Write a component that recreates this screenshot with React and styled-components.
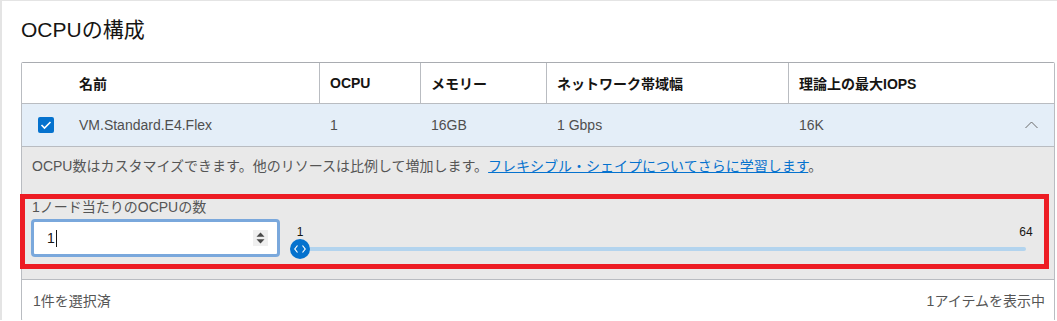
import React from 'react';
import styled, { createGlobalStyle } from 'styled-components';

const GlobalStyle = createGlobalStyle`
  html, body {
    margin: 0;
    padding: 0;
    background: #ffffff;
  }
  body {
    font-family: "Liberation Sans", "Noto Sans CJK JP", sans-serif;
    color: #161513;
  }
`;

const Page = styled.div`
  border-left: 2px solid #e4e4e4;
  border-top: 1px solid #e4e4e4;
  padding: 15px 2px 0 19px;
  height: 320px;
  box-sizing: border-box;
  overflow: hidden;
`;

const Title = styled.h2`
  margin: 0;
  font-size: 21px;
  font-weight: normal;
  line-height: 28px;
  color: #161513;
`;

const Table = styled.div`
  margin-top: 18px;
  border: 1px solid #b9bcc1;
  border-top-color: #a9acb1;
  border-radius: 2px;
  font-size: 14px;
`;

const Row = styled.div`
  display: grid;
  grid-template-columns: 46px 251px 101px 126px 242px 1fr;
  height: ${p => p.$h}px;
  background: ${p => p.$bg || '#ffffff'};
  border-bottom: 1px solid #b9bcc1;
`;

const HeadCell = styled.div`
  display: flex;
  align-items: center;
  padding-left: ${p => (p.$first ? 11 : 10)}px;
  border-left: ${p => (p.$divider ? '1px solid #b9bcc1' : 'none')};
  font-weight: bold;
  color: #161513;
`;

const Cell = styled.div`
  display: flex;
  align-items: center;
  justify-content: ${p => (p.$center ? 'center' : 'flex-start')};
  padding-left: ${p => (p.$center ? 0 : 11)}px;
  padding-right: ${p => (p.$pr ? p.$pr : 0)}px;
  color: #4f4f4f;
`;

const Check = styled.span`
  width: 16px;
  height: 16px;
  border-radius: 2px;
  background: #0572ce;
  display: flex;
  align-items: center;
  justify-content: center;
  margin-left: 2px;
`;

const Chevron = styled.svg`
  margin-left: auto;
`;

const Details = styled.div`
  background: #e9e9e9;
  border-bottom: 1px solid #b9bcc1;
  padding: 9px 5px 10px 0;
`;

const Description = styled.p`
  margin: 0 0 18px 10px;
  line-height: 20px;
  font-size: 14px;
  color: #555555;
`;

const LearnLink = styled.a`
  color: #0572ce;
  text-decoration: underline;
`;

const Highlight = styled.div`
  margin-left: -2px;
  border: 5px solid #ed1c24;
  padding: 0 8px 5px 6px;
`;

const FieldLabel = styled.div`
  padding-left: 1px;
  font-size: 14px;
  line-height: 16px;
  color: #555555;
`;

const FieldRow = styled.div`
  display: flex;
  gap: 10px;
  margin-top: 4px;
`;

const NumberBox = styled.div`
  width: 249px;
  height: 38px;
  box-sizing: border-box;
  border: 3px solid #7aa8dc;
  border-radius: 4px;
  background: #ffffff;
  display: flex;
  align-items: center;
  padding: 0 9px 0 13px;
  font-size: 14px;
  color: #161513;
`;

const Caret = styled.span`
  display: inline-block;
  width: 1px;
  height: 17px;
  background: #161513;
  margin-left: 1px;
`;

const Spinner = styled.span`
  margin-left: auto;
  width: 15px;
  height: 16px;
  background: #efefef;
  display: flex;
  align-items: center;
  justify-content: center;
`;

const Slider = styled.div`
  flex: 1;
  padding-top: 6px;
`;

const Ticks = styled.div`
  display: flex;
  justify-content: space-between;
  font-size: 12px;
  line-height: 14px;
  color: #161513;
`;

const Tick = styled.span`
  width: 20px;
  text-align: center;
`;

const TrackArea = styled.div`
  height: 20px;
  margin: 0 10px;
  position: relative;
  display: flex;
  align-items: center;
`;

const Track = styled.div`
  flex: 1;
  height: 4px;
  border-radius: 2px;
  background: #b3d4ee;
`;

const Thumb = styled.span`
  position: absolute;
  top: 0;
  width: 20px;
  height: 20px;
  margin-left: -10px;
  border-radius: 50%;
  background: #0572ce;
  display: flex;
  align-items: center;
  justify-content: center;
`;

const Footer = styled.div`
  height: 40px;
  display: flex;
  align-items: center;
  justify-content: space-between;
  padding: 0 9px 0 11px;
  color: #555555;
  font-size: 14px;
`;

const columns = ['名前', 'OCPU', 'メモリー', 'ネットワーク帯域幅', '理論上の最大IOPS'];
const shape = { name: 'VM.Standard.E4.Flex', ocpu: '1', memory: '16GB', network: '1 Gbps', iops: '16K' };
const min = 1;
const max = 64;
const value = 1;

export default function App() {
  const pct = ((value - min) / (max - min)) * 100;
  return (
    <Page>
      <GlobalStyle />
      <Title>OCPUの構成</Title>
      <Table>
        <Row $h={40}>
          <div />
          {columns.map((c, i) => (
            <HeadCell key={c} $first={i === 0} $divider={i > 0}>{c}</HeadCell>
          ))}
        </Row>
        <Row $h={42} $bg="#e4eef8">
          <Cell $center>
            <Check>
              <svg width="12" height="10" viewBox="0 0 12 10">
                <polyline points="1.5,5 4.5,8 10.5,2" fill="none" stroke="#ffffff" strokeWidth="1.6" />
              </svg>
            </Check>
          </Cell>
          <Cell>{shape.name}</Cell>
          <Cell>{shape.ocpu}</Cell>
          <Cell>{shape.memory}</Cell>
          <Cell>{shape.network}</Cell>
          <Cell $pr={16}>
            {shape.iops}
            <Chevron width="13" height="8" viewBox="0 0 13 8">
              <polyline points="0.5,7 6.5,1 12.5,7" fill="none" stroke="#6b6b6b" strokeWidth="1" />
            </Chevron>
          </Cell>
        </Row>
        <Details>
          <Description>
            OCPU数はカスタマイズできます。他のリソースは比例して増加します。
            <LearnLink href="#">フレキシブル・シェイプについてさらに学習します</LearnLink>。
          </Description>
          <Highlight>
            <FieldLabel>1ノード当たりのOCPUの数</FieldLabel>
            <FieldRow>
              <NumberBox>
                {value}
                <Caret />
                <Spinner>
                  <svg width="9" height="12" viewBox="0 0 9 12">
                    <polygon points="4.5,0.5 8.5,4.8 0.5,4.8" fill="#4a4a4a" />
                    <polygon points="0.5,7.2 8.5,7.2 4.5,11.5" fill="#4a4a4a" />
                  </svg>
                </Spinner>
              </NumberBox>
              <Slider>
                <Ticks>
                  <Tick>{min}</Tick>
                  <Tick>{max}</Tick>
                </Ticks>
                <TrackArea>
                  <Track />
                  <Thumb style={{ left: `${pct}%` }}>
                    <svg width="12" height="8" viewBox="0 0 12 8">
                      <polyline points="3.5,0.5 0.8,4 3.5,7.5" fill="none" stroke="#ffffff" strokeWidth="1.2" />
                      <polyline points="8.5,0.5 11.2,4 8.5,7.5" fill="none" stroke="#ffffff" strokeWidth="1.2" />
                    </svg>
                  </Thumb>
                </TrackArea>
              </Slider>
            </FieldRow>
          </Highlight>
        </Details>
        <Footer>
          <span>1件を選択済</span>
          <span>1アイテムを表示中</span>
        </Footer>
      </Table>
    </Page>
  );
}
